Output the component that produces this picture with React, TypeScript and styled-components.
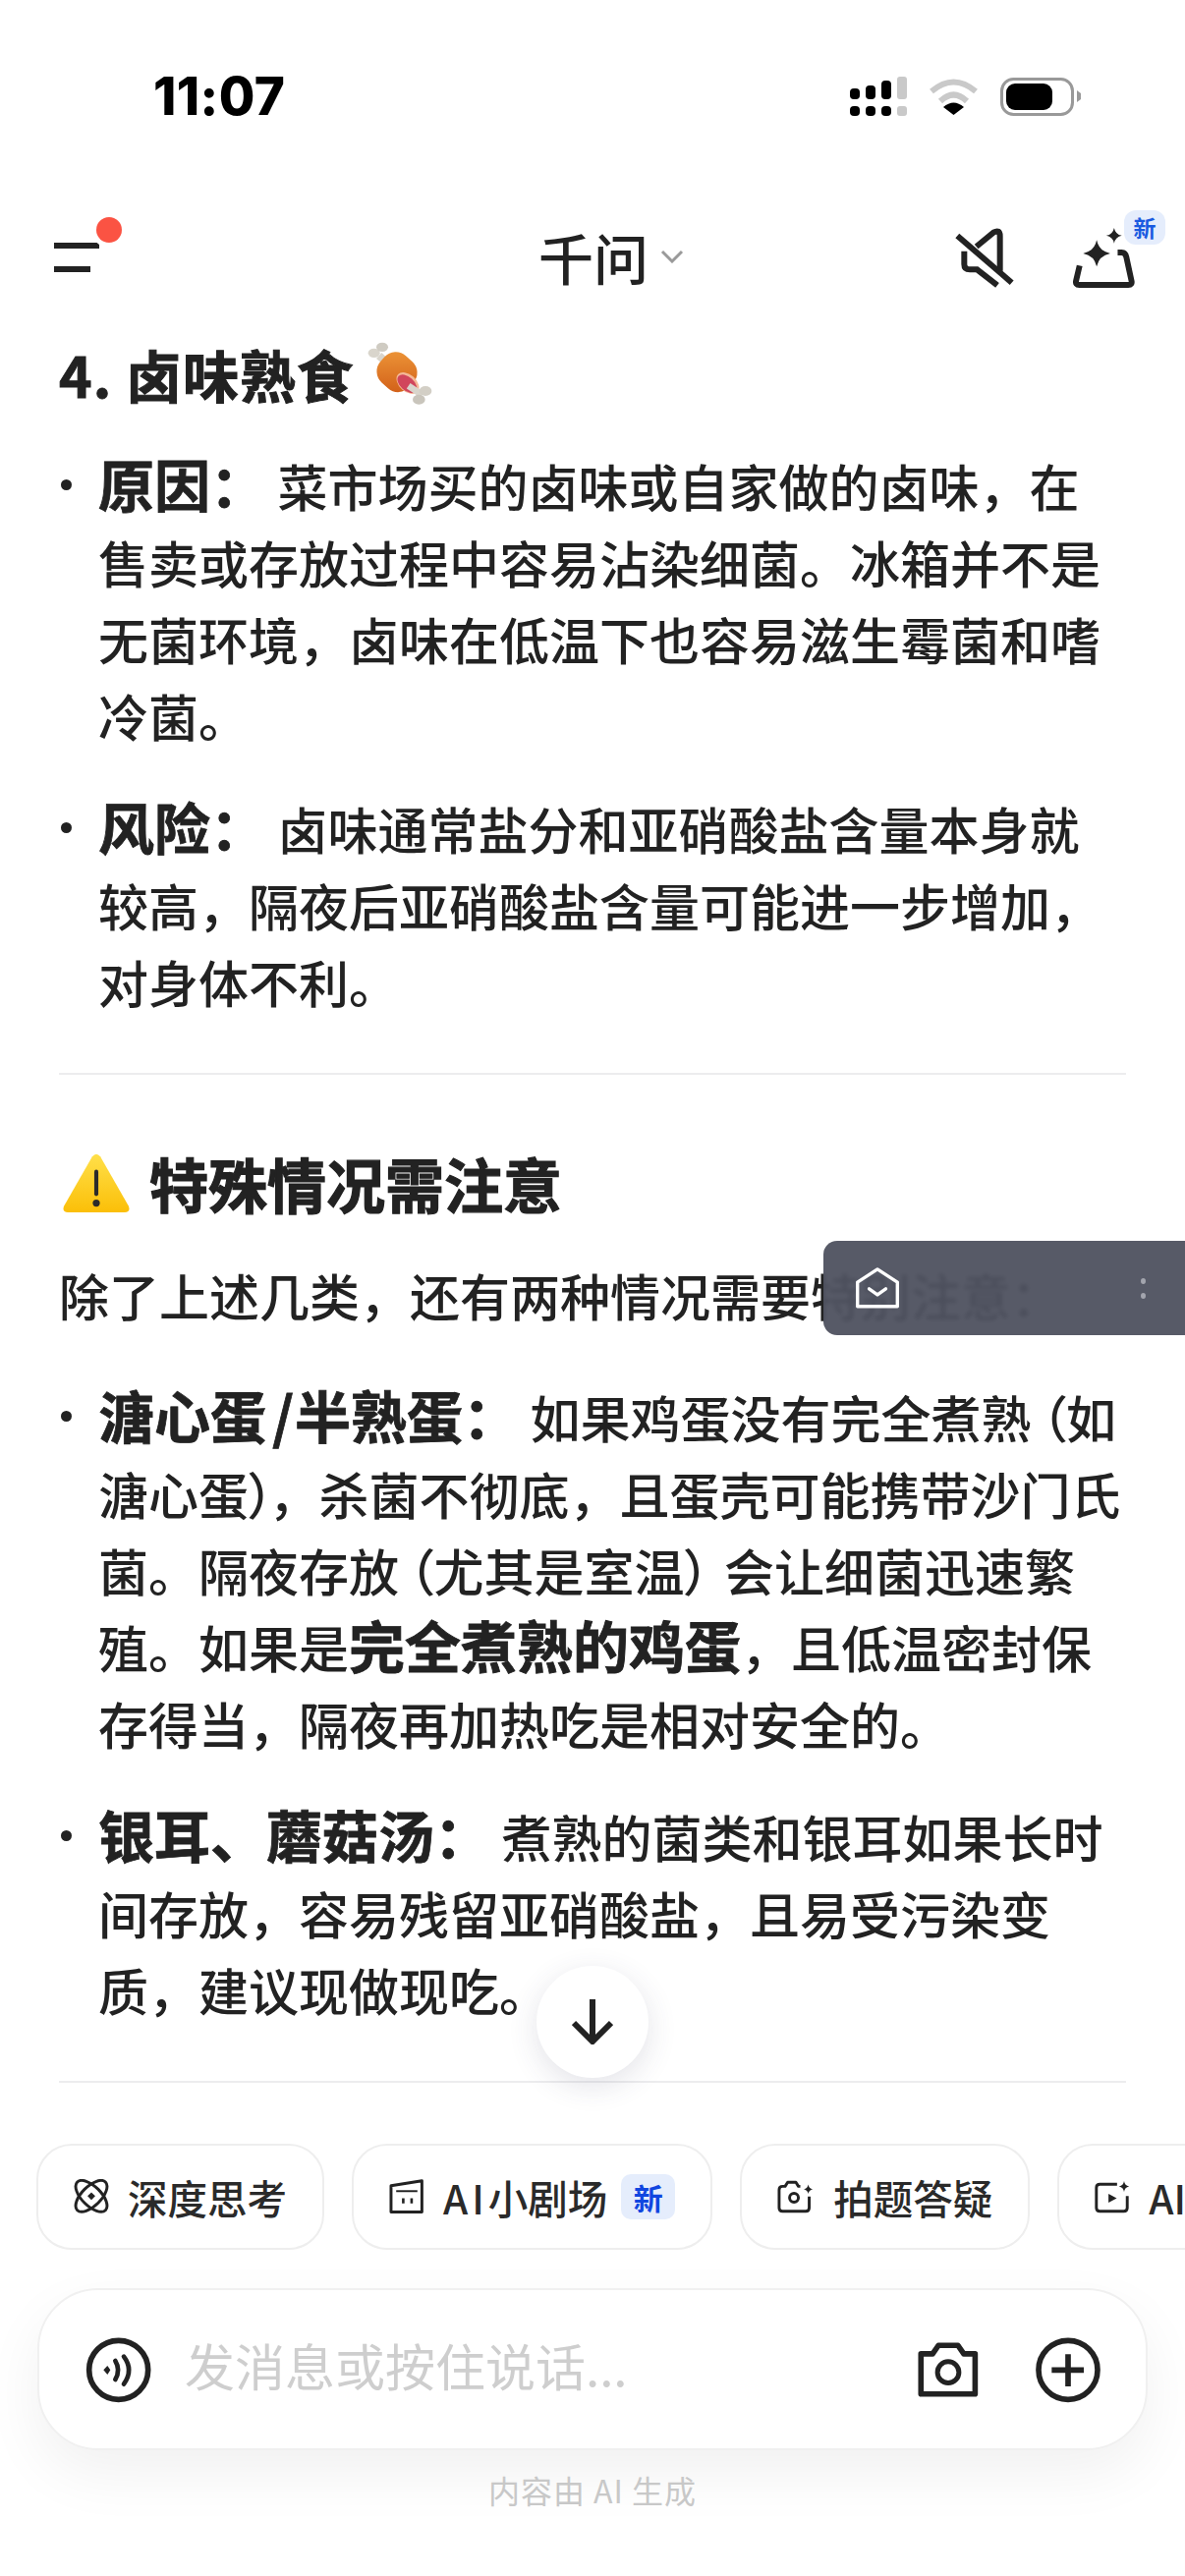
import React, { FC } from 'react';
import styled, { createGlobalStyle } from 'styled-components';

const GlobalStyle = createGlobalStyle`
  html, body {
    margin: 0;
    padding: 0;
    background: #fff;
  }
  * {
    box-sizing: border-box;
  }
`;

const Frame = styled.div`
  position: relative;
  width: 1206px;
  height: 2622px;
  overflow: hidden;
  display: flex;
  flex-direction: column;
  background: #fff;
  color: #222;
  font-family: 'Noto Sans CJK SC', 'Noto Sans', sans-serif;
`;

const StatusBar = styled.div`
  flex: none;
  height: 194px;
  display: flex;
  align-items: center;
  justify-content: space-between;
  padding: 2px 106px 0 156px;
`;

const Clock = styled.span`
  font-family: 'Inter', 'Liberation Sans', sans-serif;
  font-size: 53px;
  font-weight: 800;
  letter-spacing: 0.4px;
  color: #000;
`;

const StatusIcons = styled.div`
  display: flex;
  align-items: center;
  gap: 22px;
`;

const Header = styled.header`
  flex: none;
  height: 136px;
  display: flex;
  align-items: center;
  justify-content: space-between;
  padding: 0 49px 0 55px;
`;

const HeaderSide = styled.div<{ $end?: boolean }>`
  width: 300px;
  display: flex;
  align-items: center;
  justify-content: ${p => (p.$end ? 'flex-end' : 'flex-start')};
  gap: 59px;
`;

const Menu = styled.div`
  position: relative;
  width: 50px;
  height: 30px;
  display: flex;
  flex-direction: column;
  gap: 18px;
`;

const MenuBar = styled.span<{ $width: number }>`
  display: block;
  height: 6px;
  width: ${p => p.$width}px;
  background: #222;
`;

const RedDot = styled.span`
  position: absolute;
  left: 43px;
  top: -26px;
  width: 26px;
  height: 26px;
  border-radius: 50%;
  background: #fb5343;
  box-shadow: 0 0 0 5px #fff;
`;

const Title = styled.div`
  display: flex;
  align-items: center;
  gap: 12px;
  font-size: 56px;
  font-weight: 500;
  line-height: 64px;
  color: #222;
  padding: 0 0 3px 32px;
`;

const SparkButton = styled.div`
  position: relative;
  display: flex;
`;

const TopBadge = styled.span`
  position: absolute;
  left: 53px;
  top: -17px;
  width: 42px;
  height: 35px;
  border-radius: 12px;
  background: #e5edfc;
  color: #1a5ae0;
  font-size: 23px;
  font-weight: 700;
  line-height: 35px;
  text-align: center;
`;

const Content = styled.main`
  flex: 1;
  min-height: 0;
  overflow: hidden;
  padding: 11px 60px 0;
`;

const SmallHeading = styled.h3`
  margin: 0 0 36px;
  display: flex;
  align-items: center;
  height: 78px;
  font-size: 57px;
  font-weight: 700;
  letter-spacing: 1px;
  line-height: 78px;
  color: #222;
  white-space: pre;
  -webkit-text-stroke: 1px #222;
`;

const LargeHeading = styled.h2`
  margin: 68px 0 33px;
  display: flex;
  align-items: center;
  gap: 20px;
  height: 84px;
  padding-left: 4px;
  font-size: 60px;
  font-weight: 700;
  line-height: 84px;
  color: #222;
  -webkit-text-stroke: 1.2px #222;
`;

const Paragraph = styled.p`
  margin: 0;
  font-size: 51px;
  font-weight: 500;
  line-height: 78px;
  white-space: nowrap;
`;

const List = styled.ul<{ $top?: number }>`
  margin: ${p => p.$top || 0}px 0 0;
  padding: 0;
  list-style: none;
  display: flex;
  flex-direction: column;
  gap: 37px;
`;

const Item = styled.li`
  position: relative;
  padding-left: 40px;
  font-size: 51px;
  font-weight: 500;
  line-height: 78px;
  white-space: nowrap;

  &::before {
    content: '';
    position: absolute;
    left: 2px;
    top: 33px;
    width: 11px;
    height: 11px;
    border-radius: 50%;
    background: #222;
  }
`;

const Strong = styled.strong`
  font-size: 57px;
  font-weight: 700;
  line-height: 1;
  -webkit-text-stroke: 0.8px #222;
`;

const Slash = styled.span`
  margin: 0 1px 0 6px;
`;

const Paren = styled.span<{ $left?: number; $right?: number }>`
  margin-left: ${p => p.$left || 0}px;
  margin-right: ${p => p.$right || 0}px;
  font-feature-settings: 'palt';
`;

const Divider = styled.hr`
  margin: 54px 0 0;
  border: none;
  height: 2px;
  background: #ececee;
`;

const Bottom = styled.footer`
  flex: none;
  height: 440px;
  display: flex;
  flex-direction: column;
`;

const Chips = styled.div`
  display: flex;
  gap: 28px;
  padding-left: 37px;
  overflow: hidden;
`;

const Chip = styled.div<{ $clipped?: boolean }>`
  flex: none;
  height: 108px;
  min-width: ${p => (p.$clipped ? 300 : 0)}px;
  display: flex;
  align-items: center;
  gap: 19px;
  padding: 0 36px 0 36px;
  border: 2px solid #eeeeee;
  border-radius: 36px;
  background: #fff;
  font-size: 40.5px;
  font-weight: 500;
  color: #2a2a2a;
  white-space: nowrap;
`;

const Latin = styled.span`
  letter-spacing: 4px;
`;

const ChipBadge = styled.span`
  width: 55px;
  height: 46px;
  border-radius: 10px;
  background: #e5edfc;
  color: #1146e0;
  font-size: 30px;
  font-weight: 700;
  line-height: 46px;
  text-align: center;
  margin-left: -5px;
`;

const InputBar = styled.div`
  margin: 39px 38px 0;
  height: 165px;
  display: flex;
  align-items: center;
  padding: 0 45px 0 47px;
  border: 2px solid #f0f0f0;
  border-radius: 62px;
  background: #fff;
  box-shadow: 0 24px 60px rgba(0, 0, 0, 0.06);
`;

const Placeholder = styled.span`
  flex: 1;
  margin-left: 33px;
  padding-bottom: 10px;
  font-size: 51px;
  color: #cecece;
`;

const InputAction = styled.div`
  display: flex;
  align-items: center;
  gap: 55px;
`;

const Disclaimer = styled.div`
  margin-top: 18px;
  text-align: center;
  font-size: 32px;
  letter-spacing: 1px;
  line-height: 44px;
  color: #c8c8c8;
`;

const ScrollButton = styled.div`
  position: absolute;
  left: 546px;
  top: 2001px;
  width: 114px;
  height: 114px;
  border-radius: 50%;
  display: flex;
  align-items: center;
  justify-content: center;
  background: #fff;
  box-shadow: 0 8px 30px rgba(60, 60, 90, 0.14);
`;

const FloatingPill = styled.div`
  position: absolute;
  left: 838px;
  top: 1263px;
  width: 368px;
  height: 96px;
  display: flex;
  align-items: center;
  justify-content: space-between;
  padding: 0 40px 0 33px;
  border-radius: 14px 0 0 14px;
  background: rgba(78, 81, 95, 0.95);
  backdrop-filter: blur(2px);
`;

const PillDots = styled.div`
  display: flex;
  flex-direction: column;
  gap: 9px;
`;

const PillDot = styled.span`
  width: 5px;
  height: 6px;
  border-radius: 50%;
  background: #a3a5ae;
`;

const INK = '#222';

const SignalIcon: FC = () => (
  <svg width='58' height='40' viewBox='0 0 58 40'>
    <rect x='0' y='12' width='10' height='11' rx='4' fill='#000' />
    <rect x='16' y='9' width='10' height='14' rx='4' fill='#000' />
    <rect x='32' y='4' width='10' height='19' rx='4' fill='#000' />
    <rect x='48' y='0' width='10' height='23' rx='3' fill='#c9c9c9' />
    <rect x='0' y='30' width='10' height='10' rx='4' fill='#000' />
    <rect x='16' y='30' width='10' height='10' rx='4' fill='#000' />
    <rect x='32' y='30' width='10' height='10' rx='4' fill='#000' />
    <rect x='48' y='30' width='10' height='10' rx='3' fill='#c9c9c9' />
  </svg>
);

const WifiIcon: FC = () => (
  <svg width='51' height='37' viewBox='0 0 51 37'>
    <path d='M3 13 Q25.5 -6 48 13' fill='none' stroke='#c9c9c9' strokeWidth='6' />
    <path d='M12 23 Q25.5 10 39 23' fill='none' stroke='#c9c9c9' strokeWidth='6' />
    <path d='M25.5 37 L15 29 Q25.5 20 36 29 Z' fill='#000' />
  </svg>
);

const BatteryIcon: FC = () => (
  <svg width='82' height='39' viewBox='0 0 82 39'>
    <rect x='1.5' y='1.5' width='72' height='36' rx='12' fill='none' stroke='#999' strokeWidth='3' />
    <rect x='6' y='6' width='47' height='27' rx='9' fill='#000' />
    <path d='M78 13 L82 16 V22 L78 25 Z' fill='#999' />
  </svg>
);

const MuteIcon: FC = () => (
  <svg width='60' height='62' viewBox='515 118 180 186' fill='none' stroke={INK} strokeWidth='18'>
    <path d='M522 145 L688 288' />
    <path d='M580 178 L632 135 Q652 124 652 146 V252' />
    <path d='M543 192 V232 Q543 248 560 248 H582 L644 296' />
  </svg>
);

const SparkIcon: FC = () => (
  <svg width='66' height='63' viewBox='868 105 198 192'>
    <path
      d='M890 225 L879 272 Q876 285 889 285 H1041 Q1054 285 1051 272 L1035 198 Q1032 184 1020 184 H1008'
      fill='none'
      stroke={INK}
      strokeWidth='18'
    />
    <path d='M943 145 Q950 180 985 187 Q950 194 943 228 Q936 194 901 187 Q936 180 943 145 Z' fill={INK} />
    <path d='M997 108 Q1001 128 1021 132 Q1001 136 997 156 Q993 136 973 132 Q993 128 997 108 Z' fill={INK} />
  </svg>
);

const MeatIcon: FC = () => (
  <svg width='66' height='65' viewBox='1115 478 198 195'>
    <defs>
      <linearGradient id='meatSkin' x1='0' y1='0' x2='1' y2='1'>
        <stop offset='0' stopColor='#ef9a3a' />
        <stop offset='1' stopColor='#cf5a16' />
      </linearGradient>
    </defs>
    <path d='M1150 520 L1190 555' stroke='#d9d5cc' strokeWidth='24' />
    <ellipse cx='1135' cy='512' rx='18' ry='14' fill='#d9d5cc' />
    <ellipse cx='1160' cy='494' rx='18' ry='14' fill='#cfcbc2' />
    <rect
      x='1146'
      y='515'
      width='118'
      height='110'
      rx='46'
      transform='rotate(42 1205 570)'
      fill='url(#meatSkin)'
    />
    <ellipse cx='1238' cy='604' rx='26' ry='40' transform='rotate(-48 1238 604)' fill='#f4b896' />
    <ellipse cx='1236' cy='606' rx='21' ry='35' transform='rotate(-48 1236 606)' fill='#d1465c' />
    <path d='M1240 612 L1282 640' stroke='#d9d5cc' strokeWidth='20' />
    <ellipse cx='1292' cy='628' rx='19' ry='15' fill='#d3cfc6' />
    <ellipse cx='1272' cy='654' rx='19' ry='15' fill='#c9c5bc' />
  </svg>
);

const WarningIcon: FC = () => (
  <svg width='68' height='60' viewBox='0 0 66 58'>
    <defs>
      <linearGradient id='warnFill' x1='0' y1='0' x2='0' y2='1'>
        <stop offset='0' stopColor='#ffe04a' />
        <stop offset='1' stopColor='#fbbf08' />
      </linearGradient>
    </defs>
    <path d='M29 3 Q33 -2 37 3 L65 52 Q67 58 61 58 H5 Q-1 58 1 52 Z' fill='url(#warnFill)' />
    <rect x='31' y='16' width='4' height='26' rx='2' fill='#2b2b2b' />
    <circle cx='33' cy='49' r='3.5' fill='#2b2b2b' />
  </svg>
);

const OrbitIcon: FC = () => (
  <svg width='36' height='36' viewBox='45 55 110 110' fill='none' stroke={INK} strokeWidth='9'>
    <ellipse cx='100' cy='108' rx='62' ry='30' transform='rotate(45 100 108)' />
    <ellipse cx='100' cy='108' rx='62' ry='30' transform='rotate(-45 100 108)' />
    <path d='M100 96 L112 108 L100 120 L88 108 Z' fill={INK} stroke='none' />
  </svg>
);

const TheaterIcon: FC = () => (
  <svg width='36' height='38' viewBox='1008 50 110 115' fill='none' stroke={INK} strokeWidth='9' strokeLinejoin='round'>
    <path d='M1014 73 L1110 58 V155 H1014 Z' />
    <path d='M1030 90 H1096' strokeWidth='6' />
    <path d='M1052 112 V128 M1078 112 V128' strokeWidth='8' />
  </svg>
);

const PhotoIcon: FC = () => (
  <svg width='38' height='36' viewBox='65 55 118 108' fill='none' stroke={INK} strokeWidth='9' strokeLinejoin='round'>
    <path d='M138 76 H132 L124 63 H98 L90 76 H82 Q71 76 71 87 V144 Q71 155 82 155 H155 Q166 155 166 144 V108' />
    <circle cx='118' cy='112' r='14' />
    <path d='M163 70 Q165 82 177 85 Q165 88 163 100 Q161 88 149 85 Q161 82 163 70 Z' fill={INK} stroke='none' />
  </svg>
);

const VideoIcon: FC = () => (
  <svg width='36' height='34' viewBox='1030 55 110 105' fill='none' stroke={INK} strokeWidth='9'>
    <path d='M1100 68 H1046 Q1035 68 1035 79 V142 Q1035 153 1046 153 H1121 Q1132 153 1132 142 V105' />
    <path d='M1073 98 L1099 112 L1073 126 Z' fill={INK} stroke='none' />
    <path d='M1122 58 Q1124 72 1138 75 Q1124 78 1122 92 Q1120 78 1106 75 Q1120 72 1122 58 Z' fill={INK} stroke='none' />
  </svg>
);

const VoiceIcon: FC = () => (
  <svg width='68' height='68' viewBox='80 50 204 204' fill='none' stroke={INK} strokeLinecap='round'>
    <circle cx='181' cy='153' r='90' strokeWidth='17' />
    <path d='M135 153 L147 140 L156 153 L147 167 Z' fill={INK} stroke='none' />
    <path d='M171 125 Q188 153 171 182' strokeWidth='14' />
    <path d='M197 112 Q228 153 197 196' strokeWidth='14' />
  </svg>
);

const CameraIcon: FC = () => (
  <svg width='66' height='60' viewBox='100 65 200 180' fill='none' stroke={INK} strokeWidth='17' strokeLinejoin='round'>
    <path d='M116 106 H152 L170 80 H230 L248 106 H283 V230 H116 Z' />
    <circle cx='200' cy='163' r='33' strokeWidth='15' />
  </svg>
);

const PlusIcon: FC = () => (
  <svg width='68' height='68' viewBox='458 50 204 204' fill='none' stroke={INK} strokeWidth='17'>
    <circle cx='560' cy='153' r='90' />
    <path d='M510 153 H608 M560 105 V203' />
  </svg>
);

const ArrowDownIcon: FC = () => (
  <svg width='42' height='46' viewBox='0 0 42 46' fill='none' stroke={INK} strokeWidth='6'>
    <path d='M21 0 V43' />
    <path d='M2 24 L21 43 L40 24' />
  </svg>
);

const ChevronIcon: FC = () => (
  <svg width='24' height='14' viewBox='0 0 24 14' fill='none' stroke='#9a9a9a' strokeWidth='3'>
    <path d='M2 2 L12 12 L22 2' />
  </svg>
);

const InboxIcon: FC = () => (
  <svg width='44' height='44' viewBox='150 120 130 125' fill='none' stroke='#fff' strokeWidth='10' strokeLinejoin='round'>
    <path d='M215 126 L275 165 V238 H155 V165 Z' />
    <path d='M190 185 L215 203 L240 185' strokeLinecap='round' />
  </svg>
);

const App: FC = () => {
  return (
    <Frame>
      <GlobalStyle />
      <StatusBar>
        <Clock>11:07</Clock>
        <StatusIcons>
          <SignalIcon />
          <WifiIcon />
          <BatteryIcon />
        </StatusIcons>
      </StatusBar>

      <Header>
        <HeaderSide>
          <Menu>
            <MenuBar $width={46} />
            <MenuBar $width={37} />
            <RedDot />
          </Menu>
        </HeaderSide>
        <Title>
          千问
          <ChevronIcon />
        </Title>
        <HeaderSide $end>
          <MuteIcon />
          <SparkButton>
            <SparkIcon />
            <TopBadge>新</TopBadge>
          </SparkButton>
        </HeaderSide>
      </Header>

      <Content>
        <SmallHeading>
          4. 卤味熟食 <MeatIcon />
        </SmallHeading>
        <List>
          <Item>
            <Strong>原因：</Strong> 菜市场买的卤味或自家做的卤味，在
            <br />
            售卖或存放过程中容易沾染细菌。冰箱并不是
            <br />
            无菌环境，卤味在低温下也容易滋生霉菌和嗜
            <br />
            冷菌。
          </Item>
          <Item>
            <Strong>风险：</Strong> 卤味通常盐分和亚硝酸盐含量本身就
            <br />
            较高，隔夜后亚硝酸盐含量可能进一步增加，
            <br />
            对身体不利。
          </Item>
        </List>
        <Divider />
        <LargeHeading>
          <WarningIcon />
          特殊情况需注意
        </LargeHeading>
        <Paragraph>除了上述几类，还有两种情况需要特别注意：</Paragraph>
        <List $top={46}>
          <Item>
            <Strong>
              溏心蛋<Slash>/</Slash>半熟蛋：
            </Strong>{' '}
            如果鸡蛋没有完全煮熟<Paren $left={10}>（</Paren>如
            <br />
            溏心蛋<Paren $right={-5}>）</Paren>，杀菌不彻底，且蛋壳可能携带沙门氏
            <br />
            菌。隔夜存放<Paren $left={10}>（</Paren>尤其是室温<Paren $right={15}>）</Paren>会让细菌迅速繁
            <br />
            殖。如果是<Strong>完全煮熟的鸡蛋</Strong>，且低温密封保
            <br />
            存得当，隔夜再加热吃是相对安全的。
          </Item>
          <Item>
            <Strong>银耳、蘑菇汤：</Strong> 煮熟的菌类和银耳如果长时
            <br />
            间存放，容易残留亚硝酸盐，且易受污染变
            <br />
            质，建议现做现吃。
          </Item>
        </List>
        <Divider />
      </Content>

      <Bottom>
        <Chips>
          <Chip>
            <OrbitIcon />
            深度思考
          </Chip>
          <Chip>
            <TheaterIcon />
            <span>
              <Latin>AI</Latin>小剧场
            </span>
            <ChipBadge>新</ChipBadge>
          </Chip>
          <Chip>
            <PhotoIcon />
            拍题答疑
          </Chip>
          <Chip $clipped>
            <VideoIcon />
            AI
          </Chip>
        </Chips>
        <InputBar>
          <VoiceIcon />
          <Placeholder>发消息或按住说话...</Placeholder>
          <InputAction>
            <CameraIcon />
            <PlusIcon />
          </InputAction>
        </InputBar>
        <Disclaimer>内容由 AI 生成</Disclaimer>
      </Bottom>

      <ScrollButton>
        <ArrowDownIcon />
      </ScrollButton>
      <FloatingPill>
        <InboxIcon />
        <PillDots>
          <PillDot />
          <PillDot />
        </PillDots>
      </FloatingPill>
    </Frame>
  );
};

export default App;
